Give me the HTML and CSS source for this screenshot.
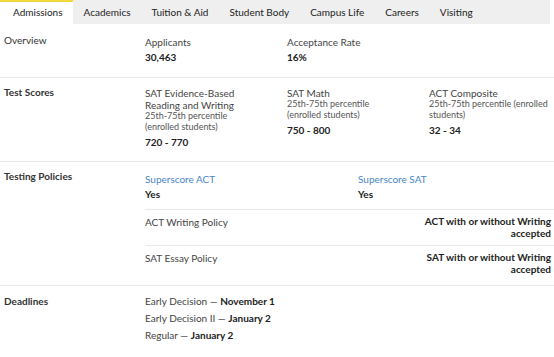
FILE: index.html
```html
<!DOCTYPE html>
<html lang="en">
  <head>
    <meta charset="UTF-8" />
    <title>Admissions</title>
    <link rel="stylesheet" href="styles.css">
  </head>
  <body>
    <nav class="tabs">
      <a class="tab active">Admissions</a>
      <a class="tab">Academics</a>
      <a class="tab">Tuition &amp; Aid</a>
      <a class="tab">Student Body</a>
      <a class="tab">Campus Life</a>
      <a class="tab">Careers</a>
      <a class="tab">Visiting</a>
    </nav>

    <section class="row row-overview">
      <div class="label">Overview</div>
      <div class="cols">
        <div class="stat">
          <div class="name">Applicants</div>
          <div class="value">30,463</div>
        </div>
        <div class="stat">
          <div class="name">Acceptance Rate</div>
          <div class="value">16%</div>
        </div>
      </div>
    </section>

    <section class="row row-scores">
      <div class="label bold">Test Scores</div>
      <div class="cols">
        <div class="stat">
          <div class="name">SAT Evidence-Based<br>Reading and Writing</div>
          <div class="note">25th-75th percentile<br>(enrolled students)</div>
          <div class="value">720 - 770</div>
        </div>
        <div class="stat">
          <div class="name">SAT Math</div>
          <div class="note">25th-75th percentile<br>(enrolled students)</div>
          <div class="value">750 - 800</div>
        </div>
        <div class="stat">
          <div class="name">ACT Composite</div>
          <div class="note">25th-75th percentile (enrolled<br>students)</div>
          <div class="value">32 - 34</div>
        </div>
      </div>
    </section>

    <section class="row row-policies">
      <div class="label bold">Testing Policies</div>
      <div class="policies">
        <div class="super">
          <div class="stat">
            <div class="link">Superscore ACT</div>
            <div class="value">Yes</div>
          </div>
          <div class="stat">
            <div class="link">Superscore SAT</div>
            <div class="value">Yes</div>
          </div>
        </div>
        <div class="policy">
          <div class="name">ACT Writing Policy</div>
          <div class="answer">ACT with or without Writing<br>accepted</div>
        </div>
        <div class="policy">
          <div class="name">SAT Essay Policy</div>
          <div class="answer">SAT with or without Writing<br>accepted</div>
        </div>
      </div>
    </section>

    <section class="row row-deadlines">
      <div class="label bold">Deadlines</div>
      <ul class="deadlines">
        <li>Early Decision &mdash; <b>November 1</b></li>
        <li>Early Decision II &mdash; <b>January 2</b></li>
        <li>Regular &mdash; <b>January 2</b></li>
      </ul>
    </section>
  </body>
</html>
```

FILE: styles.css
```css
* {
  box-sizing: border-box;
}
body {
  margin: 0;
  background: #fff;
  color: #333;
  font-family: "Lato", "Liberation Sans", sans-serif;
  font-size: 10px;
  line-height: 12px;
}

/* tabs */
.tabs {
  display: flex;
  width: 550px;
  height: 24px;
  background: #efefef;
  white-space: nowrap;
}
.tab {
  padding: 6px 10px 0 11px;
  color: #222;
}
.tab.active {
  background: #fff;
  border-top: 2px solid #f3d93a;
  padding: 4px 10px 0 13px;
}

/* rows */
.row {
  display: grid;
  grid-template-columns: 145px 1fr;
  border-bottom: 1px solid #e9e9e9;
}
.label {
  padding-left: 4px;
  color: #333;
}
.bold {
  font-weight: bold;
}
.cols {
  display: grid;
  grid-template-columns: 142px 142px 1fr;
}
.name {
  color: #444;
}
.note {
  color: #555;
  font-size: 9px;
  line-height: 10.5px;
}
.value {
  color: #222;
  font-weight: bold;
  margin-top: 4px;
}

.row-overview {
  height: 54px;
  padding-top: 10px;
}
.row-overview .name {
  margin-top: 2px;
}
.row-overview .value {
  margin-top: 3px;
}
.row-scores {
  height: 84px;
  padding-top: 8px;
}
.row-scores .name {
  padding-top: 1px;
}

/* policies */
.row-policies {
  padding-top: 8px;
}
.super {
  display: grid;
  grid-template-columns: 213px 1fr;
  height: 39px;
  padding-top: 3px;
}
.super .value {
  margin-top: 3px;
}
.link {
  color: #4a86c8;
}
.policy {
  display: flex;
  justify-content: space-between;
  border-top: 1px solid #e9e9e9;
  padding: 5px 3px 0 0;
  height: 36px;
}
.policy + .policy {
  height: 40px;
}
.policy .name {
  padding-top: 1px;
}
.answer {
  text-align: right;
  font-weight: bold;
  color: #222;
}

/* deadlines */
.row-deadlines {
  border-bottom: none;
  padding-top: 9px;
}
.deadlines {
  list-style: none;
  margin: 0;
  padding: 0;
}
.deadlines li {
  color: #444;
  line-height: 17px;
  margin-top: -2px;
  margin-bottom: 2px;
}
.deadlines b {
  color: #222;
}
```
